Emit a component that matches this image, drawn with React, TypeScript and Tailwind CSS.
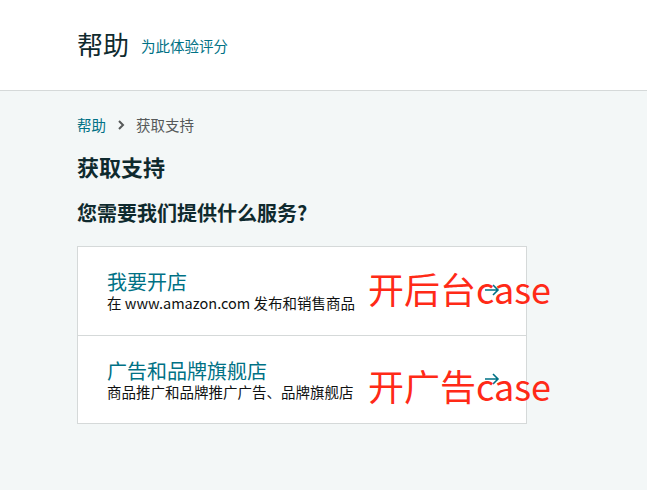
const font = { fontFamily: '"Noto Sans CJK SC", "Noto Sans", sans-serif' };

const options = [
  {
    title: "我要开店",
    desc: "在 www.amazon.com 发布和销售商品",
    note: "开后台case",
    noteTop: "top-[17px]",
  },
  {
    title: "广告和品牌旗舰店",
    desc: "商品推广和品牌推广广告、品牌旗舰店",
    note: "开广告case",
    noteTop: "top-[25px]",
  },
];

function Arrow() {
  return (
    <svg width="16" height="14" viewBox="0 0 16 14" fill="none" stroke="#007185" strokeWidth="1.6">
      <path d="M1 7h13M9 2l5 5-5 5" />
    </svg>
  );
}

export default function App() {
  return (
    <div className="min-h-[490px] bg-[#f3f7f7] text-[#0f1111]" style={font}>
      <header className="flex h-[91px] items-center border-b border-[#d5d9d9] bg-white px-[77px] pb-[2px]">
        <h1 className="text-[26px] leading-none text-[#0f2a2e]">帮助</h1>
        <span className="ml-3 mt-1 text-[14.5px] text-[#007185]">为此体验评分</span>
      </header>

      <main className="px-[77px] pt-[24px]">
        <nav className="flex items-center text-[14.5px] leading-[20px]">
          <span className="text-[#007185]">帮助</span>
          <svg className="mx-[11px]" width="8" height="12" viewBox="0 0 8 12" fill="none" stroke="#565959" strokeWidth="2">
            <path d="M2 2l4 4-4 4" />
          </svg>
          <span className="text-[#565959]">获取支持</span>
        </nav>
        <h2 className="mt-[16px] text-[22px] font-bold leading-[30px] text-[#0f2a2e]">获取支持</h2>
        <h3 className="mt-[18px] text-[20px] font-bold leading-[28px] text-[#0f2a2e]">您需要我们提供什么服务?</h3>

        <div className="mt-[19px] w-[450px] border border-[#d5d9d9] bg-white">
          {options.map((o, i) => (
            <div
              key={i}
              className={`relative flex h-[88px] justify-between pl-[29px] pr-[26px] pt-[23px] ${i > 0 ? "border-t border-[#d5d9d9]" : ""}`}
            >
              <div>
                <div className="text-[20px] leading-[24px] text-[#007185]">{o.title}</div>
                <div className="text-[14.5px] leading-[18px] text-[#0f1111]">{o.desc}</div>
              </div>
              <div className="mt-[13px]">
                <Arrow />
              </div>
              <span className={`absolute left-[290px] ${o.noteTop} whitespace-nowrap text-[36px] leading-[48px] text-[#ff2a17]`}>
                {o.note}
              </span>
            </div>
          ))}
        </div>
      </main>
    </div>
  );
}
